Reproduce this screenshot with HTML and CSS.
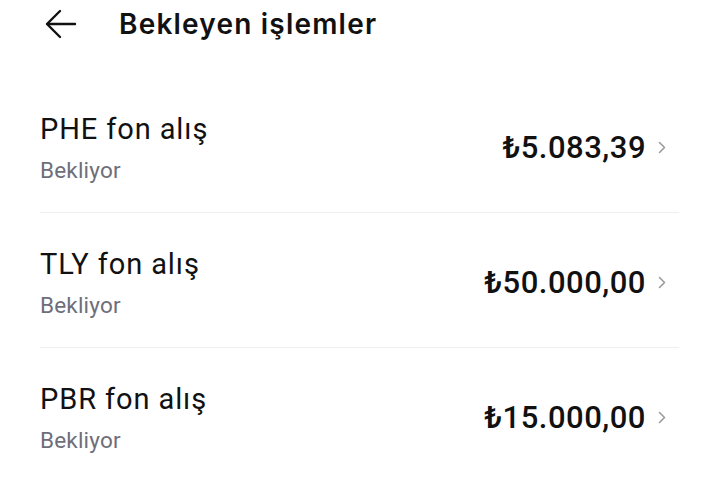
FILE: index.html
```html
<!DOCTYPE html>
<html lang="tr">
<head>
<meta charset="utf-8">
<link rel="stylesheet" href="styles.css">
</head>
<body>
<header class="header">
  <svg class="back" width="32" height="30" viewBox="0 0 32 30" fill="none" stroke="#111" stroke-width="2.4" stroke-linecap="round" stroke-linejoin="round">
    <path d="M30 15H2.5"/>
    <path d="M15 2L2 15l13 13"/>
  </svg>
  <h1 class="title">Bekleyen işlemler</h1>
</header>
<main class="list">
  <div class="row">
    <div class="info">
      <div class="name">PHE fon alış</div>
      <div class="status">Bekliyor</div>
    </div>
    <div class="amount-wrap">
      <span class="amount">₺5.083,39</span>
      <svg class="chev" width="8" height="13" viewBox="0 0 8 13" fill="none" stroke="#9c9c9c" stroke-width="1.6" stroke-linecap="round" stroke-linejoin="round"><path d="M1.5 1.5l5 5-5 5"/></svg>
    </div>
  </div>
  <div class="row">
    <div class="info">
      <div class="name">TLY fon alış</div>
      <div class="status">Bekliyor</div>
    </div>
    <div class="amount-wrap">
      <span class="amount">₺50.000,00</span>
      <svg class="chev" width="8" height="13" viewBox="0 0 8 13" fill="none" stroke="#9c9c9c" stroke-width="1.6" stroke-linecap="round" stroke-linejoin="round"><path d="M1.5 1.5l5 5-5 5"/></svg>
    </div>
  </div>
  <div class="row">
    <div class="info">
      <div class="name">PBR fon alış</div>
      <div class="status">Bekliyor</div>
    </div>
    <div class="amount-wrap">
      <span class="amount">₺15.000,00</span>
      <svg class="chev" width="8" height="13" viewBox="0 0 8 13" fill="none" stroke="#9c9c9c" stroke-width="1.6" stroke-linecap="round" stroke-linejoin="round"><path d="M1.5 1.5l5 5-5 5"/></svg>
    </div>
  </div>
</main>
</body>
</html>
```

FILE: styles.css
```css
html, body {
  margin: 0;
  padding: 0;
  background: #ffffff;
}

body {
  font-family: Roboto, "Noto Sans", "Liberation Sans", sans-serif;
  color: #111111;
  width: 719px;
  height: 486px;
  overflow: hidden;
}

.header {
  display: flex;
  align-items: center;
  height: 48px;
  padding-left: 45px;
}

.back {
  display: block;
  flex: none;
}

.title {
  margin: 0 0 0 42px;
  font-family: Inter, Roboto, sans-serif;
  font-size: 28px;
  font-weight: 600;
  letter-spacing: 1.2px;
  color: #111111;
}

.list {
  margin-top: 30px;
  padding: 0 40px;
}

.row {
  display: flex;
  align-items: center;
  justify-content: space-between;
  height: 134px;
  border-bottom: 1px solid #efeff1;
}

.row:last-child {
  border-bottom: none;
}

.info {
  display: flex;
  flex-direction: column;
  gap: 10px;
  margin-top: 6px;
}

.name {
  font-size: 29px;
  line-height: 34px;
  letter-spacing: 0.9px;
  color: #111111;
}

.status {
  font-size: 22.5px;
  line-height: 28px;
  letter-spacing: 0.2px;
  color: #6e6e7a;
}

.amount-wrap {
  display: flex;
  align-items: center;
  gap: 12px;
  margin-top: 5px;
  margin-right: 13px;
}

.amount {
  font-size: 31px;
  line-height: 36px;
  font-weight: 500;
  letter-spacing: 0.5px;
  color: #111111;
}

.chev {
  display: block;
}
```
